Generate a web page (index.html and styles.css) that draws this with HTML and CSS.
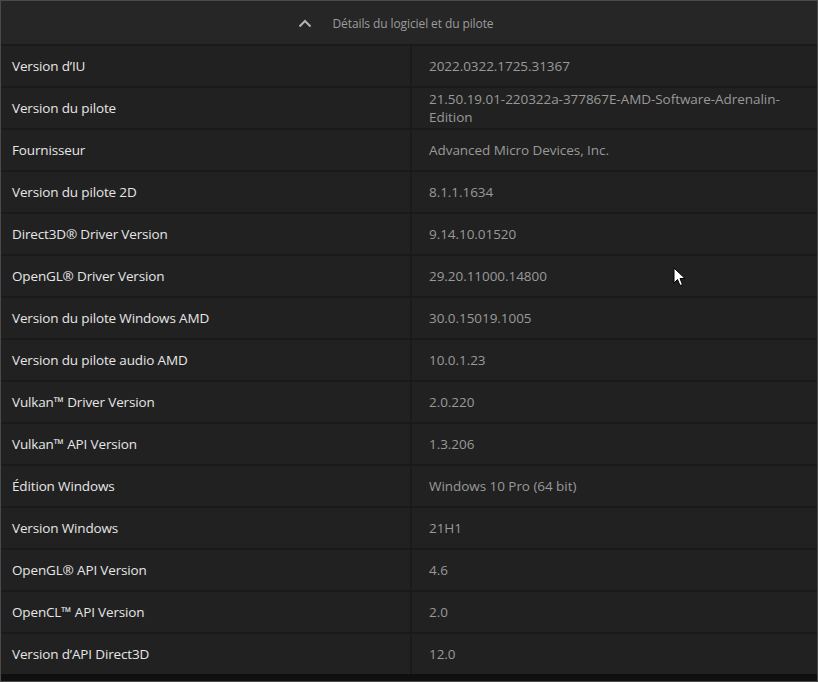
FILE: index.html
```html
<!DOCTYPE html>
<html lang="fr">
<head>
<meta charset="utf-8">
<link rel="stylesheet" href="styles.css">
</head>
<body>
<div class="panel">
  <div class="header">
    <svg class="chev" width="14" height="9" viewBox="0 0 14 9"><path d="M1.5 7.5 L7 2 L12.5 7.5" fill="none" stroke="#b4b4b4" stroke-width="2"/></svg>
    <span class="title">Détails du logiciel et du pilote</span>
    <span class="spacer"></span>
  </div>
  <div class="rows">
    <div class="row"><div class="k">Version d’IU</div><div class="v">2022.0322.1725.31367</div></div>
    <div class="row"><div class="k">Version du pilote</div><div class="v two">21.50.19.01-220322a-377867E-AMD-Software-Adrenalin-Edition</div></div>
    <div class="row"><div class="k">Fournisseur</div><div class="v">Advanced Micro Devices, Inc.</div></div>
    <div class="row"><div class="k">Version du pilote 2D</div><div class="v">8.1.1.1634</div></div>
    <div class="row"><div class="k">Direct3D® Driver Version</div><div class="v">9.14.10.01520</div></div>
    <div class="row"><div class="k">OpenGL® Driver Version</div><div class="v">29.20.11000.14800</div></div>
    <div class="row"><div class="k">Version du pilote Windows AMD</div><div class="v">30.0.15019.1005</div></div>
    <div class="row"><div class="k">Version du pilote audio AMD</div><div class="v">10.0.1.23</div></div>
    <div class="row"><div class="k">Vulkan™ Driver Version</div><div class="v">2.0.220</div></div>
    <div class="row"><div class="k">Vulkan™ API Version</div><div class="v">1.3.206</div></div>
    <div class="row"><div class="k">Édition Windows</div><div class="v">Windows 10 Pro (64 bit)</div></div>
    <div class="row"><div class="k">Version Windows</div><div class="v">21H1</div></div>
    <div class="row"><div class="k">OpenGL® API Version</div><div class="v">4.6</div></div>
    <div class="row"><div class="k">OpenCL™ API Version</div><div class="v">2.0</div></div>
    <div class="row"><div class="k">Version d’API Direct3D</div><div class="v">12.0</div></div>
  </div>
  <div class="foot"></div>
  <svg class="cursor" width="14" height="21" viewBox="0 0 14 21"><path d="M1 1 L1 16 L4.5 12.5 L7 18.5 L9.5 17.5 L7 11.5 L12 11.5 Z" fill="#fff" stroke="#000" stroke-width="1"/></svg>
</div>
</body>
</html>
```
FILE: styles.css
```css
* { box-sizing: border-box; }
html, body { margin: 0; padding: 0; background: #1e1e1e; }
body { width: 818px; height: 682px; overflow: hidden; font-family: "Open Sans", "Noto Sans", sans-serif; }
.panel {
  position: relative;
  width: 818px;
  height: 682px;
  border: 1px solid #4a4a4a;
  background: #101010;
  display: flex;
  flex-direction: column;
}
.header {
  height: 43px;
  flex: none;
  background: #262626;
  display: flex;
  align-items: center;
  justify-content: center;
  gap: 21px;
  padding-left: 8px;
  padding-top: 2px;
}
.chev { display: block; margin-top: -1px; }
.spacer { width: 14px; }
.title { color: #9c9c9c; font-size: 12px; letter-spacing: -0.1px; }
.rows { display: flex; flex-direction: column; }
.row {
  height: 42px;
  display: grid;
  grid-template-columns: 411px 1fr;
  background: #212121;
  border-top: 2px solid #1a1a1a;
}
.k {
  display: flex;
  align-items: center;
  padding-left: 11px;
  color: #e6e6e6;
  font-size: 13.5px;
  letter-spacing: -0.15px;
  border-right: 2px solid #1a1a1a;
}
.v {
  display: flex;
  align-items: center;
  padding-left: 17px;
  padding-right: 22px;
  color: #999999;
  font-size: 13.5px;
  letter-spacing: -0.05px;
}
.v.two { line-height: 18px; }
.foot { flex: 1; background: #0f0f0f; }
.cursor { position: absolute; left: 672px; top: 266px; }
```
